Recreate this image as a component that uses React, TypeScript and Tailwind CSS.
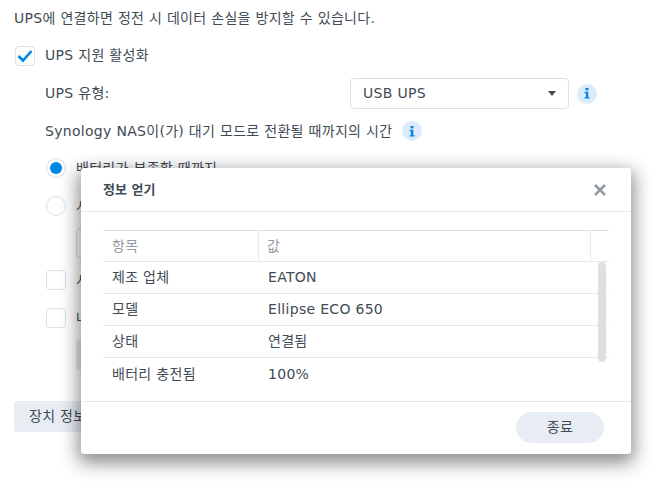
import React from 'react';

const FONT = "font-['DejaVu_Sans','Noto_Sans_CJK_KR',sans-serif]";

const Checkbox = ({ checked }: { checked?: boolean }) => (
    <div className="w-5 h-5 shrink-0 rounded-[4px] border border-[#d7e1eb] bg-white flex items-center justify-center">
        {checked && (
            <svg width="16" height="14" viewBox="0 0 16 14" fill="none">
                <path d="M1.5 7 L6 11.5 L14.5 2" stroke="#0086e5" strokeWidth="2.6" />
            </svg>
        )}
    </div>
);

const Radio = ({ checked }: { checked?: boolean }) => (
    <div className="w-5 h-5 shrink-0 rounded-full border border-[#d7e1eb] bg-white flex items-center justify-center">
        {checked && <div className="w-3 h-3 rounded-full bg-[#0086e5]" />}
    </div>
);

const InfoIcon = () => (
    <div className="w-5 h-5 shrink-0 rounded-full bg-[#dcebfb] flex items-center justify-center">
        <svg width="6" height="11" viewBox="0 0 6 11" fill="#0086e5">
            <rect x="1.5" y="0" width="3" height="2.4" />
            <path d="M0.6 3.8 H4.3 V9.2 H5.6 V10.6 H0.6 V9.2 H1.9 V5.2 H0.6 Z" />
        </svg>
    </div>
);

const rows = [
    { name: '제조 업체', value: 'EATON' },
    { name: '모델', value: 'Ellipse ECO 650' },
    { name: '상태', value: '연결됨' },
    { name: '배터리 충전됨', value: '100%' },
];

const InfoDialog = () => (
    <div className="absolute left-[81px] top-[168px] w-[550px] h-[286px] bg-white rounded-[3px] flex flex-col shadow-[0_6px_18px_3px_rgba(0,0,0,0.45)]">
        <div className="h-[44px] shrink-0 border-b border-[#e6eaf0] pl-[22px] pr-[24px] flex items-center justify-between">
            <span className="text-[13px] font-bold tracking-normal text-[#414b55]">정보 얻기</span>
            <svg width="14" height="14" viewBox="0 0 14 14" fill="none">
                <path d="M2 2 L12 12 M12 2 L2 12" stroke="#929aa3" strokeWidth="2.6" />
            </svg>
        </div>
        <div className="flex-1 relative pt-[18px] pl-[22px] pr-[22px]">
            <div className="border-t border-[#d7e1eb]">
                <div className="h-[31px] flex items-center border-b border-[#e6eaf0] text-[#929aa3]">
                    <div className="w-[156px] h-full pl-[9px] flex items-center border-r border-[#e6eaf0]">항목</div>
                    <div className="w-[332px] h-full pl-[8px] flex items-center border-r border-[#e6eaf0]">값</div>
                </div>
                {rows.map((row, i) => (
                    <div
                        key={row.name}
                        className={`h-[32px] flex items-center text-[#414b55] ${i < 3 ? 'border-b border-[#e6eaf0]' : ''}`}
                    >
                        <div className="w-[156px] pl-[9px]">{row.name}</div>
                        <div className="pl-[9px]">{row.value}</div>
                    </div>
                ))}
            </div>
            <div className="absolute left-[517px] top-[50px] w-2 h-[100px] rounded-full bg-[#dfdfdf]" />
        </div>
        <div className="h-[53px] shrink-0 border-t border-[#e6eaf0] pr-[27px] pb-[2px] flex items-center justify-end">
            <button className="w-[88px] h-[31px] rounded-full bg-[#e8edf4] text-[#414b55]">종료</button>
        </div>
    </div>
);

export default function App() {
    return (
        <div className={`relative w-[671px] h-[498px] overflow-hidden bg-white text-[14px] tracking-[0.3px] text-[#414b55] ${FONT}`}>
            <div className="px-[15px] pt-[9px]">
                <div className="h-[18px] leading-[18px] -ml-px whitespace-nowrap">UPS에 연결하면 정전 시 데이터 손실을 방지할 수 있습니다.</div>
                <div className="mt-[18px] flex items-center gap-[10px]">
                    <Checkbox checked />
                    <span>UPS 지원 활성화</span>
                </div>
                <div className="ml-[30px] mt-[12px] flex items-center h-[31px]">
                    <span className="w-[305px]">UPS 유형:</span>
                    <div className="w-[219px] h-[31px] rounded-[4px] border border-[#d7e1eb] pl-3 pr-3 flex items-center justify-between">
                        <span>USB UPS</span>
                        <div className="w-0 h-0 border-x-[4.5px] border-x-transparent border-t-[5px] border-t-[#414b55]" />
                    </div>
                    <div className="ml-2"><InfoIcon /></div>
                </div>
                <div className="ml-[30px] mt-[12px] flex items-center gap-[10px] h-5">
                    <span className="whitespace-nowrap">Synology NAS이(가) 대기 모드로 전환될 때까지의 시간</span>
                    <InfoIcon />
                </div>
                <div className="ml-[31px] mt-[17px] flex items-center gap-[10px] h-5">
                    <Radio checked />
                    <span>배터리가 부족할 때까지</span>
                </div>
                <div className="ml-[31px] mt-[18px] flex items-center gap-[10px] h-5">
                    <Radio />
                    <span>시간</span>
                </div>
                <div className="ml-[61px] mt-[12px] w-[120px] h-[30px] rounded-[4px] border border-[#d7e1eb]" />
                <div className="ml-[31px] mt-[12px] flex items-center gap-[10px] h-5">
                    <Checkbox />
                    <span>시간</span>
                </div>
                <div className="ml-[31px] mt-[18px] flex items-center gap-[10px] h-5">
                    <Checkbox />
                    <span>나</span>
                </div>
                <div className="ml-[61px] mt-[12px] w-[120px] h-[30px] rounded-[4px] bg-[#e8edf4]" />
                <button className="-ml-px mt-[31px] w-[110px] h-[31px] rounded-[3px] bg-[#e8edf4] text-left pl-[15px]">장치 정보</button>
            </div>
            <InfoDialog />
        </div>
    );
}
